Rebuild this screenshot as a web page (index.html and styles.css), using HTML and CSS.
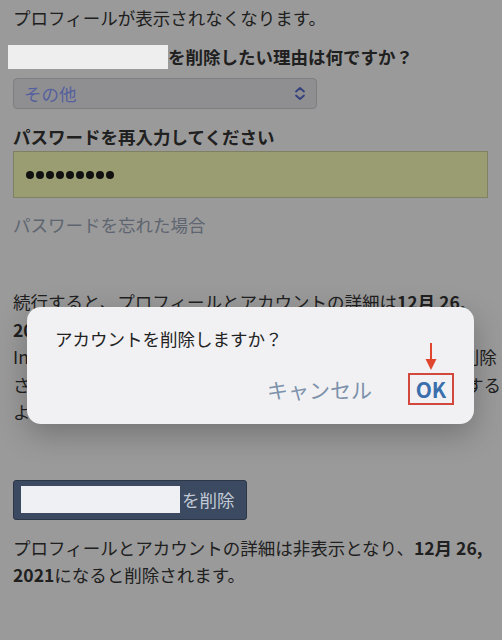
FILE: index.html
```html
<!DOCTYPE html>
<html lang="ja">
<head>
  <meta charset="utf-8" />
  <title>アカウントを削除</title>
  <meta name="viewport" content="width=device-width, initial-scale=1" />
  <link rel="stylesheet" href="styles.css">
</head>
<body>
  <!-- PAGE -->
  <div class="page">
    <p class="note">プロフィールが表示されなくなります。</p>

    <p class="label"><span class="redact redactName"></span>を削除したい理由は何ですか？</p>
    <div class="select">
      <span>その他</span>
      <svg width="12" height="15" viewBox="0 0 12 15">
        <path d="M2 5.5 L6 2 L10 5.5 M2 9.5 L6 13 L10 9.5" fill="none" stroke="#34407c" stroke-width="1.8" stroke-linecap="round" stroke-linejoin="round" />
      </svg>
    </div>

    <p class="label">パスワードを再入力してください</p>
    <div class="password">
      <span class="dot"></span><span class="dot"></span><span class="dot"></span>
      <span class="dot"></span><span class="dot"></span><span class="dot"></span>
      <span class="dot"></span><span class="dot"></span><span class="dot"></span>
    </div>

    <p class="link">パスワードを忘れた場合</p>

    <p class="text behind">続行すると、プロフィールとアカウントの詳細は<b>12月 26,</b><br><b>2021</b>になると削除されます。それまでの間はいつでも<br>Instagramに再度ログインしてアカウントを再開すれば、削除<br>されません。アカウントの削除を取り消して、利用を再開する<br>ようにできます。</p>

    <button class="deleteBtn"><span class="redact redactBtn"></span>を削除</button>

    <p class="text">プロフィールとアカウントの詳細は非表示となり、<b>12月 26,</b><br><b>2021</b>になると削除されます。</p>
  </div>

  <!-- DIALOG -->
  <div class="dialog">
    <p class="dialogTitle">アカウントを削除しますか？</p>
    <div class="dialogActions">
      <span class="cancel">キャンセル</span>
      <span class="okWrap">
        <svg class="arrow" width="12" height="28" viewBox="0 0 12 28">
          <line x1="6" y1="0" x2="6" y2="18" stroke="#e0452f" stroke-width="2" />
          <polygon points="0.5,16 11.5,16 6,27" fill="#e0452f" />
        </svg>
        <span class="ok">OK</span>
      </span>
    </div>
  </div>
</body>
</html>
```

FILE: styles.css
```css
/* ========== GLOBAL ========== */
* {
  box-sizing: border-box;
  margin: 0;
  padding: 0;
}
body {
  width: 502px;
  height: 640px;
  background: #9a9a9a;
  font-family: "Noto Sans CJK JP", "Noto Sans", sans-serif;
  font-size: 17.5px;
  color: #202020;
  overflow: hidden;
  position: relative;
}

/* ========== PAGE ========== */
.page {
  padding: 4px 0 0 13px;
}
.note {
  line-height: 27px;
}
.label {
  display: flex;
  align-items: center;
  height: 27px;
  font-weight: bold;
  margin-top: 12px;
}
.label + .password {
  margin-top: 1px;
}
.redact {
  display: inline-block;
  background: #eeeeee;
}
.redactName {
  width: 160px;
  height: 24px;
  margin-left: -5px;
}

.select {
  display: flex;
  align-items: center;
  justify-content: space-between;
  width: 304px;
  height: 31px;
  margin-top: 8px;
  margin-bottom: 14px;
  padding: 0 10px 0 10px;
  border: 1px solid #7f7f82;
  border-radius: 4px;
  background: #8f8f92;
  color: #56609e;
}

.password {
  display: flex;
  align-items: center;
  gap: 2px;
  width: 475px;
  height: 47px;
  padding-left: 12px;
  border: 1px solid #808163;
  background: #9a9c72;
}
.dot {
  width: 8px;
  height: 8px;
  border-radius: 50%;
  background: #111;
}

.link {
  margin-top: 13px;
  line-height: 27px;
  color: #5e6570;
}

.text {
  line-height: 27px;
}
.behind {
  margin-top: 50px;
  line-height: 27.5px;
  white-space: nowrap;
}

.deleteBtn {
  display: flex;
  align-items: center;
  gap: 2px;
  width: 234px;
  height: 40px;
  margin-top: 54px;
  margin-bottom: 14px;
  padding-left: 7px;
  border: 1px solid #2b3647;
  border-radius: 3px;
  background: #3b4a61;
  color: #c3cad6;
  font-family: inherit;
  font-size: 17.5px;
}
.redactBtn {
  width: 159px;
  height: 27px;
  background: #eef0f4;
}

/* ========== DIALOG ========== */
.dialog {
  position: absolute;
  top: 307px;
  left: 27px;
  width: 447px;
  height: 117px;
  border-radius: 14px;
  background: #f1f1f4;
  box-shadow: 0 10px 30px rgba(0, 0, 0, 0.25);
}
.dialogTitle {
  padding: 20px 28px 0 28px;
  line-height: 24px;
  color: #222;
}
.dialogActions {
  display: flex;
  justify-content: flex-end;
  align-items: center;
  gap: 36px;
  margin-top: 22px;
  padding-right: 20px;
}
.cancel {
  font-size: 21px;
  line-height: 32px;
  color: #7d91aa;
}
.okWrap {
  position: relative;
}
.arrow {
  position: absolute;
  top: -30px;
  left: 17px;
}
.ok {
  display: block;
  width: 46px;
  height: 32px;
  border: 2px solid #d2483d;
  text-align: center;
  font-size: 21px;
  font-weight: bold;
  line-height: 28px;
  color: #3a6fac;
}
```
